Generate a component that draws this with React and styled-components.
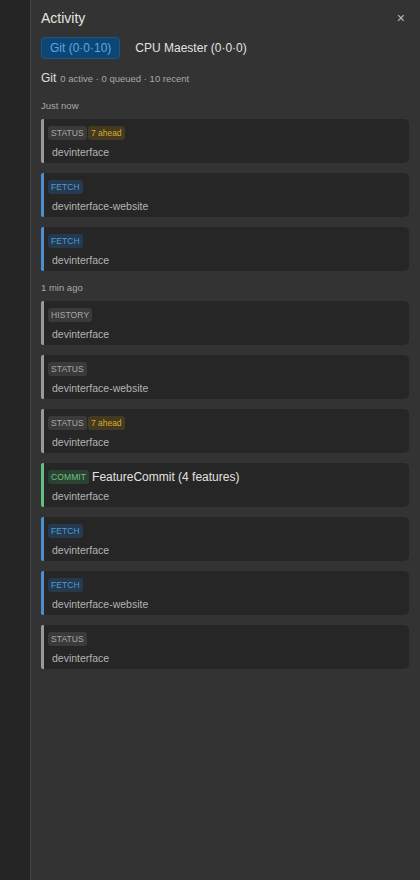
import styled, { createGlobalStyle } from "styled-components";

const GlobalStyle = createGlobalStyle`
  html, body {
    margin: 0;
    padding: 0;
    background: #252526;
  }
  body {
    font-family: "Liberation Sans", Arial, sans-serif;
  }
`;

const groups = [
  {
    label: "Just now",
    items: [
      { kind: "status", extra: "7 ahead", repo: "devinterface" },
      { kind: "fetch", repo: "devinterface-website" },
      { kind: "fetch", repo: "devinterface" },
    ],
  },
  {
    label: "1 min ago",
    items: [
      { kind: "history", repo: "devinterface" },
      { kind: "status", repo: "devinterface-website" },
      { kind: "status", extra: "7 ahead", repo: "devinterface" },
      { kind: "commit", title: "FeatureCommit (4 features)", repo: "devinterface" },
      { kind: "fetch", repo: "devinterface" },
      { kind: "fetch", repo: "devinterface-website" },
      { kind: "status", repo: "devinterface" },
    ],
  },
];

const kinds = {
  status: { edge: "#9a9a9a", bg: "#3a3a3a", fg: "#a8a8a8" },
  history: { edge: "#9a9a9a", bg: "#3a3a3a", fg: "#a8a8a8" },
  fetch: { edge: "#4a8fd0", bg: "#263a4f", fg: "#4c9ad6" },
  commit: { edge: "#62c07e", bg: "#2b4232", fg: "#6cc384" },
};

export default function App() {
  return (
    <Page>
      <GlobalStyle />
      <Rail />
      <Panel>
        <Header>
          <Title>Activity</Title>
          <Close type="button">×</Close>
        </Header>
        <Tabs>
          <Tab $active>Git (0·0·10)</Tab>
          <Tab>CPU Maester (0·0·0)</Tab>
        </Tabs>
        <Summary>
          <SummaryName>Git</SummaryName>
          <SummaryMeta>0 active · 0 queued · 10 recent</SummaryMeta>
        </Summary>
        {groups.map((g) => (
          <Group key={g.label}>
            <GroupLabel>{g.label}</GroupLabel>
            <List>
              {g.items.map((it, i) => (
                <Card key={i} $edge={kinds[it.kind].edge}>
                  <CardTop>
                    <Badge $bg={kinds[it.kind].bg} $fg={kinds[it.kind].fg}>
                      {it.kind.toUpperCase()}
                    </Badge>
                    {it.extra && (
                      <Badge $bg="#433a20" $fg="#d6a932" $plain>
                        {it.extra}
                      </Badge>
                    )}
                    {it.title && <CardTitle>{it.title}</CardTitle>}
                  </CardTop>
                  <Repo>{it.repo}</Repo>
                </Card>
              ))}
            </List>
          </Group>
        ))}
      </Panel>
    </Page>
  );
}

const Page = styled.div`
  display: flex;
  min-height: 880px;
  background: #252526;
`;

const Rail = styled.div`
  width: 30px;
  flex: none;
  background: #252526;
  border-right: 1px solid #444;
`;

const Panel = styled.div`
  flex: 1;
  background: #333333;
  padding: 9px 11px 20px 10px;
  box-sizing: border-box;
`;

const Header = styled.div`
  display: flex;
  align-items: center;
  justify-content: space-between;
  height: 18px;
`;

const Title = styled.div`
  font-size: 14px;
  color: #e4e4e4;
`;

const Close = styled.button`
  background: none;
  border: none;
  color: #bbb;
  font-size: 14px;
  padding: 0 4px 0 0;
  line-height: 1;
  cursor: pointer;
`;

const Tabs = styled.div`
  display: flex;
  align-items: center;
  gap: 6px;
  margin-top: 10px;
`;

const Tab = styled.div`
  font-size: 12px;
  height: 22px;
  line-height: 20px;
  box-sizing: border-box;
  padding: 0 8px;
  border-radius: 4px;
  border: 1px solid ${(p) => (p.$active ? "#1b5684" : "transparent")};
  background: ${(p) => (p.$active ? "#0d4675" : "transparent")};
  color: ${(p) => (p.$active ? "#5aa8e6" : "#e2e2e2")};
`;

const Summary = styled.div`
  display: flex;
  align-items: baseline;
  gap: 4px;
  margin-top: 12px;
`;

const SummaryName = styled.span`
  font-size: 12px;
  color: #e0e0e0;
`;

const SummaryMeta = styled.span`
  font-size: 9.5px;
  color: #a8a8a8;
`;

const Group = styled.div`
  margin-top: 15px;

  & + & {
    margin-top: 11px;
  }
`;

const GroupLabel = styled.div`
  font-size: 9.5px;
  color: #a8a8a8;
  margin-bottom: 8px;
`;

const List = styled.div`
  display: flex;
  flex-direction: column;
  gap: 10px;
`;

const Card = styled.div`
  background: #262626;
  border-left: 3px solid ${(p) => p.$edge};
  border-radius: 2px 5px 5px 2px;
  height: 44px;
  box-sizing: border-box;
  padding: 6px 8px 0 4px;
`;

const CardTop = styled.div`
  display: flex;
  align-items: center;
  gap: 1px;
  height: 15px;
`;

const Badge = styled.span`
  font-size: 8.5px;
  line-height: 14px;
  height: 14px;
  padding: 0 3px;
  border-radius: 3px;
  background: ${(p) => p.$bg};
  color: ${(p) => p.$fg};
  letter-spacing: ${(p) => (p.$plain ? "0" : "0.1px")};
`;

const CardTitle = styled.span`
  font-size: 12px;
  color: #e2e2e2;
  margin-left: 2px;
`;

const Repo = styled.div`
  font-size: 10.5px;
  color: #b4b4b4;
  margin-top: 6px;
  padding-left: 4px;
`;
